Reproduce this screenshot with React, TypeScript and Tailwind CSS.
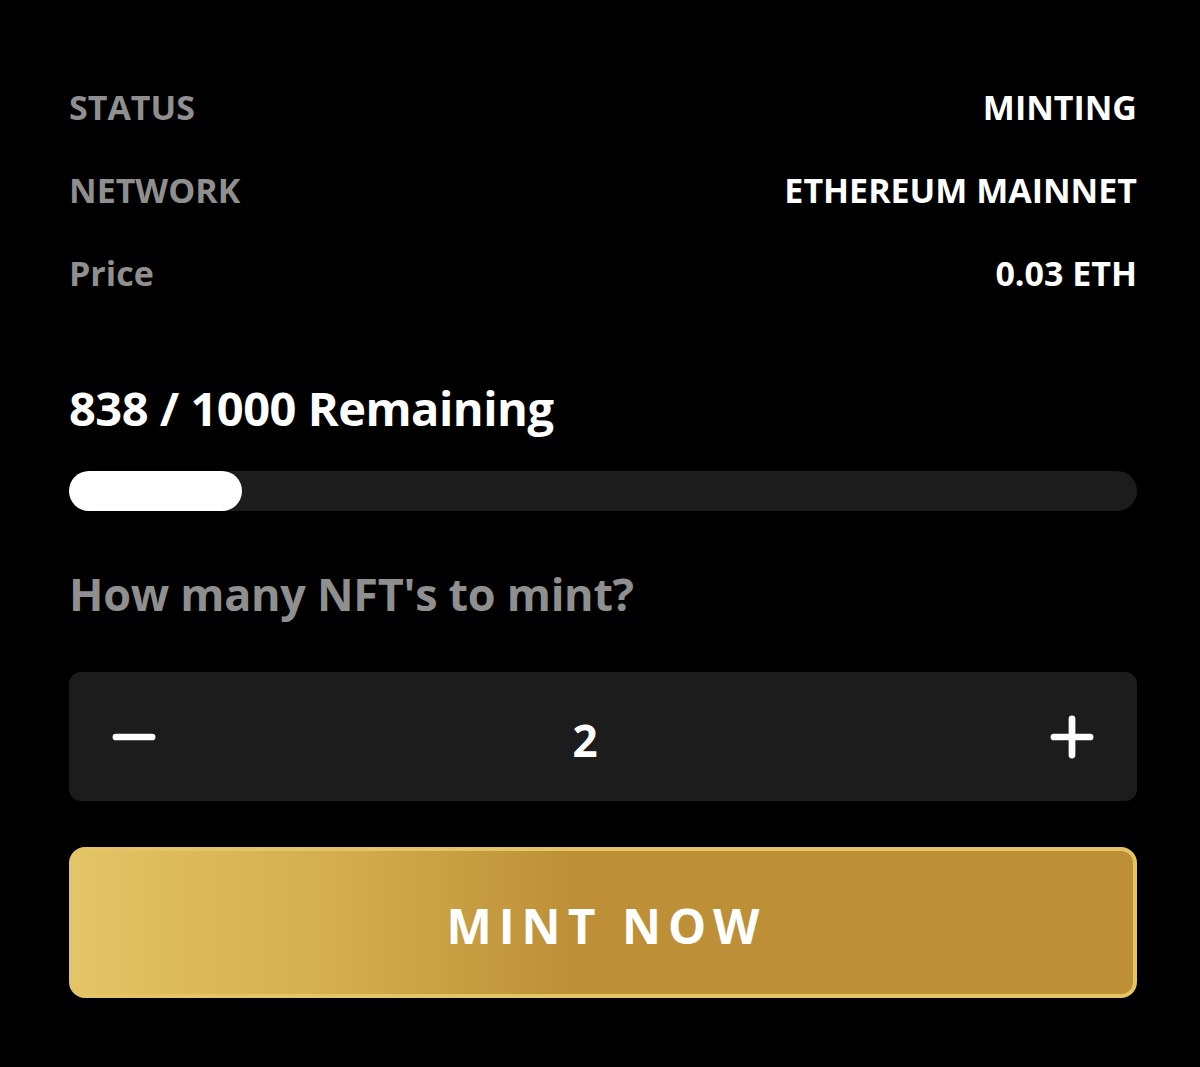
import { Minus, Plus } from 'lucide-react'

const rows = [
  { label: 'STATUS', value: 'MINTING' },
  { label: 'NETWORK', value: 'ETHEREUM MAINNET' },
  { label: 'Price', value: '0.03 ETH' },
]

export default function App() {
  const remaining = 838
  const total = 1000
  const minted = total - remaining
  const pct = (minted / total) * 100

  return (
    <div className="min-h-[1067px] w-[1200px] bg-black pl-[69px] pr-[63px] pt-[84px] font-['Open_Sans','Noto_Sans',sans-serif] font-bold text-white">
      <div className="flex flex-col gap-[37px]">
        {rows.map((row) => (
          <div key={row.label} className="flex items-center justify-between text-[34px] leading-[46px]">
            <span className="text-[#8f8f8f]">{row.label}</span>
            <span>{row.value}</span>
          </div>
        ))}
      </div>

      <h2 className="mt-[80px] text-[47px] leading-[64px] tracking-[-0.5px]">
        {remaining} / {total} Remaining
      </h2>

      <div className="mt-[31px] h-[40px] w-full rounded-full bg-[#1c1c1c]">
        <div className="h-full rounded-full bg-white" style={{ width: `${pct}%` }} />
      </div>

      <p className="mt-[52px] text-[45px] leading-[62px] tracking-[-0.3px] text-[#8f8f8f]">How many NFT's to mint?</p>

      <div className="mt-[47px] flex h-[129px] items-center justify-between rounded-[12px] bg-[#1c1c1c] px-[34px]">
        <button className="text-white">
          <Minus size={62} strokeWidth={2.6} />
        </button>
        <span className="mr-[36px] pt-[6px] text-[44px]">2</span>
        <button className="text-white">
          <Plus size={62} strokeWidth={2.6} />
        </button>
      </div>

      <button className="mt-[46px] flex h-[151px] w-full items-center justify-center rounded-[16px] border-[4px] border-[#e3c466] bg-[linear-gradient(90deg,#e3c466_0%,#d3ad4e_25%,#bd9038_47%,#bd9038_100%)] pl-[7px] pt-[6px] text-[48px] font-bold tracking-[7px] text-white">
        MINT NOW
      </button>
    </div>
  )
}
